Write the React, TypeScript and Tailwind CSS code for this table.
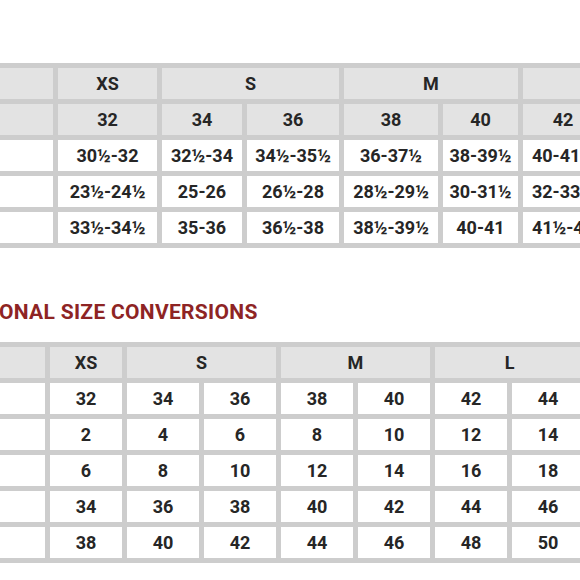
import React from "react";

const font = { fontFamily: "Roboto, 'Liberation Sans', sans-serif" };

type Cell = { text: string; span?: number; header?: boolean };

function Grid({
  cols,
  rows,
  className,
}: {
  cols: string;
  rows: Cell[][];
  className: string;
}) {
  return (
    <div
      className={`grid gap-[5px] bg-[#cdcdcd] p-[5px] w-max ${className}`}
      style={{ gridTemplateColumns: cols }}
    >
      {rows.flatMap((row, ri) =>
        row.map((c, ci) => (
          <div
            key={`${ri}-${ci}`}
            className={`h-[31px] flex items-center justify-center whitespace-nowrap text-[18px] font-bold text-[#262626] ${
              c.header ? "bg-[#e3e3e3]" : "bg-white"
            }`}
            style={c.span ? { gridColumn: `span ${c.span} / span ${c.span}` } : undefined}
          >
            {c.text}
          </div>
        ))
      )}
    </div>
  );
}

const h = (text: string, span?: number): Cell => ({ text, span, header: true });
const w = (text: string): Cell => ({ text });

const topRows: Cell[][] = [
  [h(""), h("XS"), h("S", 2), h("M", 2), h("L", 2)],
  [h(""), h("32"), h("34"), h("36"), h("38"), h("40"), h("42"), h("44")],
  [w(""), w("30½-32"), w("32½-34"), w("34½-35½"), w("36-37½"), w("38-39½"), w("40-41½"), w("42-43½")],
  [w(""), w("23½-24½"), w("25-26"), w("26½-28"), w("28½-29½"), w("30-31½"), w("32-33½"), w("34-35½")],
  [w(""), w("33½-34½"), w("35-36"), w("36½-38"), w("38½-39½"), w("40-41"), w("41½-43"), w("43½-45")],
];

const bottomRows: Cell[][] = [
  [h(""), h("XS"), h("S", 2), h("M", 2), h("L", 2)],
  [w(""), w("32"), w("34"), w("36"), w("38"), w("40"), w("42"), w("44")],
  [w(""), w("2"), w("4"), w("6"), w("8"), w("10"), w("12"), w("14")],
  [w(""), w("6"), w("8"), w("10"), w("12"), w("14"), w("16"), w("18")],
  [w(""), w("34"), w("36"), w("38"), w("40"), w("42"), w("44"), w("46")],
  [w(""), w("38"), w("40"), w("42"), w("44"), w("46"), w("48"), w("50")],
];

export default function App() {
  return (
    <div className="w-[580px] h-[580px] overflow-hidden bg-white relative" style={font}>
      <div className="flex flex-col">
        <Grid
          className="mt-[63px] ml-[-52px]"
          cols="100px 99px 80px 92px 94px 75px 80px 80px"
          rows={topRows}
        />
        <div className="h-[94px] pt-[51px]">
          <div className="ml-[-1px] text-[21px] leading-[26px] font-bold text-[#8e2424] whitespace-nowrap tracking-[0.3px]">
            ONAL SIZE CONVERSIONS
          </div>
        </div>
        <Grid
          className="ml-[-60px]"
          cols="100px 72px 72px 72px 72px 72px 72px 72px"
          rows={bottomRows}
        />
      </div>
    </div>
  );
}
